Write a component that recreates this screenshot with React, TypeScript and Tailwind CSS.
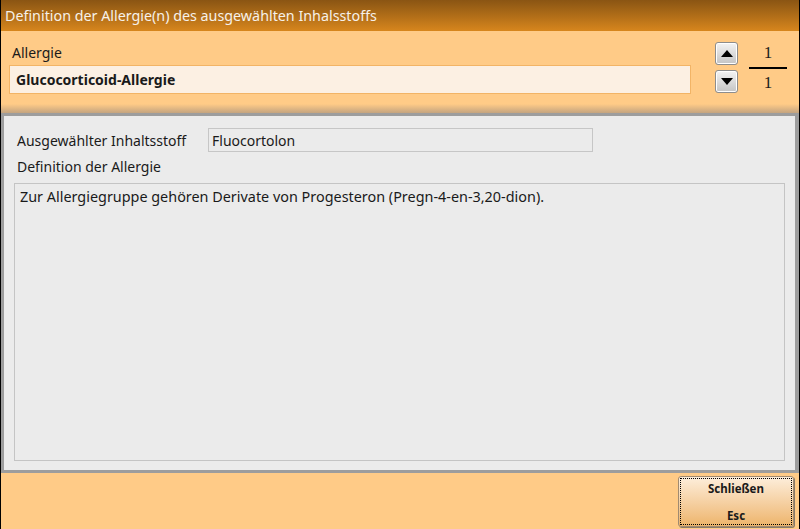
const font = { fontFamily: '"Noto Sans", "Open Sans", sans-serif' };

function ArrowButton({ dir }: { dir: "up" | "down" }) {
  return (
    <button className="flex h-[23px] w-[23px] items-center justify-center rounded-[3px] border border-[#8d8d8d] bg-gradient-to-b from-[#f4f4f4] to-[#c4c4c4] shadow-[inset_0_0_0_1px_#ffffff]">
      <svg width="12" height="7" viewBox="0 0 12 7">
        {dir === "up" ? (
          <polygon points="6,0 12,7 0,7" fill="#000" />
        ) : (
          <polygon points="0,0 12,0 6,7" fill="#000" />
        )}
      </svg>
    </button>
  );
}

export default function App() {
  return (
    <div
      className="flex h-[529px] w-[800px] flex-col border-x border-black bg-[#ffcb87] text-[14px] text-[#1a1a1a]"
      style={font}
    >
      <div className="flex h-[31px] items-center bg-gradient-to-b from-[#8a5513] to-[#d7861d] px-[4px] text-[14.3px] text-[#f6f1ea]">
        Definition der Allergie(n) des ausgewählten Inhalsstoffs
      </div>

      <div className="flex h-[73px] pl-[8px] pr-[12px]">
        <div className="flex flex-1 flex-col pt-[11px]">
          <span className="pl-[3px] leading-[22px]">Allergie</span>
          <div className="mt-[1px] flex h-[29px] w-[682px] items-center border border-[#f2b466] bg-[#fcf0e3] px-[6px] font-bold">
            Glucocorticoid-Allergie
          </div>
        </div>
        <div className="flex flex-col gap-[5px] pt-[11px]">
          <ArrowButton dir="up" />
          <ArrowButton dir="down" />
        </div>
        <div
          className="ml-[11px] flex w-[38px] flex-col items-center pt-[11px] text-[17px] leading-[22px]"
          style={{ fontFamily: '"Liberation Serif", serif' }}
        >
          <span>1</span>
          <div className="my-[3px] h-[2px] w-[38px] bg-black" />
          <span>1</span>
        </div>
      </div>
      <div className="h-[9px] bg-gradient-to-b from-[#ffcb87] to-[#c4a47f]" />

      <div className="flex h-[360px] flex-col border-[3px] border-r-[4px] border-[#9d9d9d] bg-[#ebebeb] px-[10px] pt-[12px] pb-[9px]">
        <div className="flex items-center">
          <span className="w-[194px] pl-[3px]">Ausgewählter Inhaltsstoff</span>
          <div className="flex h-[24px] w-[385px] items-center border border-[#c6c6c6] px-[3px]">
            Fluocortolon
          </div>
        </div>
        <span className="mt-[3px] pl-[3px] leading-[24px]">Definition der Allergie</span>
        <div className="mt-[4px] flex-1 border border-[#c4c4c4] px-[5px] pt-[2px] text-[14.4px]">
          Zur Allergiegruppe gehören Derivate von Progesteron (Pregn-4-en-3,20-dion).
        </div>
      </div>

      <div className="flex flex-1 justify-end pt-[3px] pr-[5px]">
        <button className="flex h-[51px] w-[116px] flex-col items-center justify-between rounded-[3px] border border-[#a08a70] bg-gradient-to-b from-[#fdeedb] to-[#edb46a] p-[1px] text-[11.5px] font-bold shadow-[1px_1px_0_#8a7a66]">
          <div className="flex h-full w-full flex-col items-center justify-between border border-dotted border-black pt-[2px] leading-[16px]">
            <span>Schließen</span>
            <span>Esc</span>
          </div>
        </button>
      </div>
    </div>
  );
}
